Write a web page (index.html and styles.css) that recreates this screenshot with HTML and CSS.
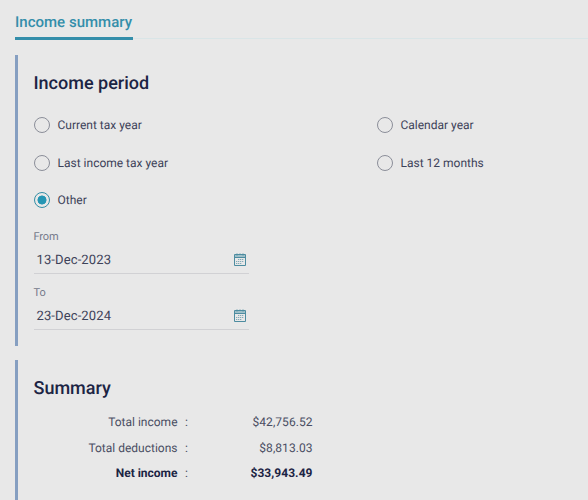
FILE: index.html
```html
<!DOCTYPE html>
<html lang="en">
<head>
<meta charset="utf-8">
<title>Income summary</title>
<link rel="stylesheet" href="styles.css">
</head>
<body>
<svg class="sprite" aria-hidden="true">
  <symbol id="calendar" viewBox="0 0 12 13">
    <path d="M.5 1.5h11v11H.5zM.5 4.5h11" fill="none" stroke="#4d8ca0"/>
    <path d="M1 2h10v2H1z" fill="#9fc0c9"/>
    <path d="M3 .5v2M6 .5v1M9 .5v2" stroke="#4d8ca0"/>
    <path d="M4 6.5h6M2 8.5h8M2 10.5h6" stroke="#82abb8" stroke-dasharray="1.3 .7"/>
  </symbol>
</svg>
<nav class="tabs"><a class="tab">Income summary</a></nav>
<main>
  <section class="panel period">
    <h2>Income period</h2>
    <div class="options">
      <label class="option"><span class="radio"></span><span>Current tax year</span></label>
      <label class="option"><span class="radio"></span><span>Calendar year</span></label>
      <label class="option"><span class="radio"></span><span>Last income tax year</span></label>
      <label class="option"><span class="radio"></span><span>Last 12 months</span></label>
      <label class="option"><span class="radio checked"></span><span>Other</span></label>
    </div>
    <div class="field">
      <span class="caption">From</span>
      <div class="input"><span>13-Dec-2023</span><svg class="icon"><use href="#calendar"/></svg></div>
    </div>
    <div class="field">
      <span class="caption">To</span>
      <div class="input"><span>23-Dec-2024</span><svg class="icon"><use href="#calendar"/></svg></div>
    </div>
  </section>
  <section class="panel summary">
    <h2>Summary</h2>
    <div class="row"><span class="name">Total income</span><span class="colon">:</span><span class="amount">$42,756.52</span></div>
    <div class="row"><span class="name">Total deductions</span><span class="colon">:</span><span class="amount">$8,813.03</span></div>
    <div class="row net"><span class="name">Net income</span><span class="colon">:</span><span class="amount">$33,943.49</span></div>
  </section>
</main>
</body>
</html>
```
FILE: styles.css
```css
* { box-sizing: border-box; }
body {
  margin: 0;
  height: 500px;
  overflow: hidden;
  background: #e8e8e8;
  color: #3d4259;
  font: 12px/18px Roboto, sans-serif;
  letter-spacing: 0;
  text-rendering: geometricPrecision;
}
.sprite { display: none; }
.tabs {
  display: flex;
  height: 40px;
  margin-left: 15px;
  background: linear-gradient(#d9e5e7, #d9e5e7) 0 38px / 100% 1px no-repeat;
}
.tab {
  width: 118px;
  padding-top: 12px;
  border-bottom: 3px solid #348eaa;
  color: #348eaa;
  font-size: 15px;
  line-height: 20px;
  font-weight: 500;
  letter-spacing: .02px;
  white-space: nowrap;
}
main { padding: 15px 0 0 15px; }
.panel {
  border-left: 3px solid #869fc1;
  padding-left: 15.5px;
}
.period { height: 291px; padding-top: 17px; }
.summary { height: 140px; margin-top: 14px; padding-top: 17px; }
h2 {
  margin: 0;
  color: #1c2444;
  font-size: 18px;
  line-height: 24px;
  font-weight: 500;
  letter-spacing: 0;
}
.options {
  display: grid;
  grid-template-columns: 343px 1fr;
  grid-auto-rows: 37.7px;
  margin-top: 10px;
}
.option { display: flex; align-items: center; gap: 8px; }
.radio {
  width: 16px;
  height: 16px;
  border: 1px solid #8b8e99;
  border-radius: 50%;
}
.radio.checked {
  border-color: #348ea5;
  background: radial-gradient(circle, #2596b4 4.2px, transparent 4.8px);
}
.field { width: 215px; height: 55.7px; padding-top: 9px; }
.caption { display: block; color: #74798a; font-size: 11px; line-height: 18px; letter-spacing: -.1px; }
.input {
  display: flex;
  align-items: center;
  justify-content: space-between;
  height: 28px;
  padding: 0 3px;
  border-bottom: 1px solid #d1d1d4;
  font-size: 13px;
  line-height: 20px;
  letter-spacing: .12px;
}
.input span { padding-top: 3px; }
.icon { width: 12px; height: 13px; }
.row {
  display: grid;
  grid-template-columns: 144px 17px 118px;
  height: 25.6px;
  align-items: center;
  color: #4a4e63;
}
h2 + .row { margin-top: 8.3px; }
.name, .amount { text-align: right; }
.amount { letter-spacing: .05px; }
.colon { padding-left: 7.5px; }
.net .name, .net .amount { color: #1c2444; font-weight: 700; }
```
